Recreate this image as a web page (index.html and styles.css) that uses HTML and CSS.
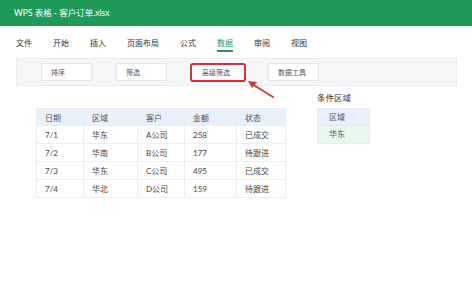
FILE: index.html
```html
<!DOCTYPE html>
<html lang="zh-CN">
<head>
    <meta charset="UTF-8">
    <meta name="viewport" content="width=device-width, initial-scale=1.0">
    <title>WPS 表格 - 客户订单.xlsx</title>
    <link rel="stylesheet" href="styles.css">
</head>
<body>
    <div class="title-bar">WPS 表格 - 客户订单.xlsx</div>

    <div class="menu-tabs">
        <span class="tab">文件</span>
        <span class="tab">开始</span>
        <span class="tab">插入</span>
        <span class="tab">页面布局</span>
        <span class="tab">公式</span>
        <span class="tab active">数据</span>
        <span class="tab">审阅</span>
        <span class="tab">视图</span>
    </div>

    <div class="toolbar">
        <div class="tool-btn">排序</div>
        <div class="tool-btn">筛选</div>
        <div class="tool-btn highlight">高级筛选</div>
        <div class="tool-btn">数据工具</div>
    </div>

    <!-- arrow pointing at the advanced filter button -->
    <svg class="pointer-arrow" width="40" height="30" viewBox="0 0 40 30">
        <line x1="29" y1="20" x2="8" y2="7" stroke="#d23a3a" stroke-width="2" stroke-linecap="round"/>
        <polygon points="4,4 13,5 8,11" fill="#d23a3a"/>
    </svg>

    <div class="content">
        <table class="data-table">
            <thead>
                <tr>
                    <th class="col-date">日期</th>
                    <th class="col-area">区域</th>
                    <th class="col-client">客户</th>
                    <th class="col-amount">金额</th>
                    <th class="col-status">状态</th>
                </tr>
            </thead>
            <tbody>
                <tr><td>7/1</td><td>华东</td><td>A公司</td><td>258</td><td>已成交</td></tr>
                <tr><td>7/2</td><td>华南</td><td>B公司</td><td>177</td><td>待跟进</td></tr>
                <tr><td>7/3</td><td>华东</td><td>C公司</td><td>495</td><td>已成交</td></tr>
                <tr><td>7/4</td><td>华北</td><td>D公司</td><td>159</td><td>待跟进</td></tr>
            </tbody>
        </table>

        <div class="criteria">
            <div class="criteria-label">条件区域</div>
            <div class="criteria-box">
                <div class="criteria-head">区域</div>
                <div class="criteria-value">华东</div>
            </div>
        </div>
    </div>
</body>
</html>
```

FILE: styles.css
```css
body {
    margin: 0;
    background: #fff;
    font-family: Lato, "Noto Sans CJK SC", sans-serif;
    color: #333;
    position: relative;
}

.title-bar {
    height: 26px;
    line-height: 26px;
    padding-left: 14px;
    background-color: #1f9a5b;
    color: #fff;
    font-size: 8.5px;
}

.menu-tabs {
    display: flex;
    gap: 21px;
    padding-left: 16px;
    margin-top: 10px;
}

.menu-tabs .tab {
    font-size: 8px;
    line-height: 14px;
    border-bottom: 2px solid transparent;
    color: #333;
}

.menu-tabs .tab.active {
    color: #1f9a5b;
    border-bottom-color: #1f9a5b;
}

.toolbar {
    display: flex;
    align-items: center;
    width: 415px;
    height: 26px;
    margin: 6px 0 0 16px;
    padding-left: 24px;
    background-color: #f5f6f8;
    border: 1px solid #e9ebee;
}

.tool-btn {
    width: 40px;
    height: 16px;
    line-height: 16px;
    padding-left: 9px;
    margin-right: 23px;
    background: #fff;
    border: 1px solid #e4e6ea;
    font-size: 7px;
    color: #555;
}

.tool-btn:first-child {
    margin-right: 24px;
}

.tool-btn.highlight {
    width: 42px;
    height: 15px;
    line-height: 15px;
    padding-left: 10px;
    margin-right: 22px;
    border: 2px solid #cf3438;
    border-radius: 3px;
}

.pointer-arrow {
    position: absolute;
    left: 244px;
    top: 77px;
}

.content {
    display: flex;
    align-items: flex-start;
    padding: 6px 0 0 36px;
}

.data-table {
    margin-top: 16px;
    border-collapse: collapse;
    font-size: 8px;
    color: #444;
    box-shadow: 0 1px 2px rgba(0, 0, 0, 0.04);
}

.data-table th,
.data-table td {
    border: 1px solid #eceef1;
    padding: 0 0 0 8px;
    text-align: left;
    font-weight: normal;
}

.data-table th {
    height: 16px;
    background-color: #e7f0fb;
    color: #555;
}

.data-table td {
    height: 17px;
}

.col-date { width: 38px; }
.col-area { width: 45px; }
.col-client { width: 38px; }
.col-amount { width: 43px; }
.col-status { width: 40px; }

.criteria {
    margin-left: 31px;
}

.criteria-label {
    font-size: 8.5px;
    line-height: 12px;
    color: #333;
    margin-bottom: 4px;
}

.criteria-box {
    width: 51px;
    border: 1px solid #e6e9ee;
    font-size: 8px;
    color: #555;
}

.criteria-head {
    height: 16px;
    line-height: 16px;
    padding-left: 11px;
    background-color: #e7f0fb;
    border-bottom: 1px solid #e6e9ee;
}

.criteria-value {
    height: 17px;
    line-height: 17px;
    padding-left: 11px;
    background-color: #e9f8ee;
}
```
